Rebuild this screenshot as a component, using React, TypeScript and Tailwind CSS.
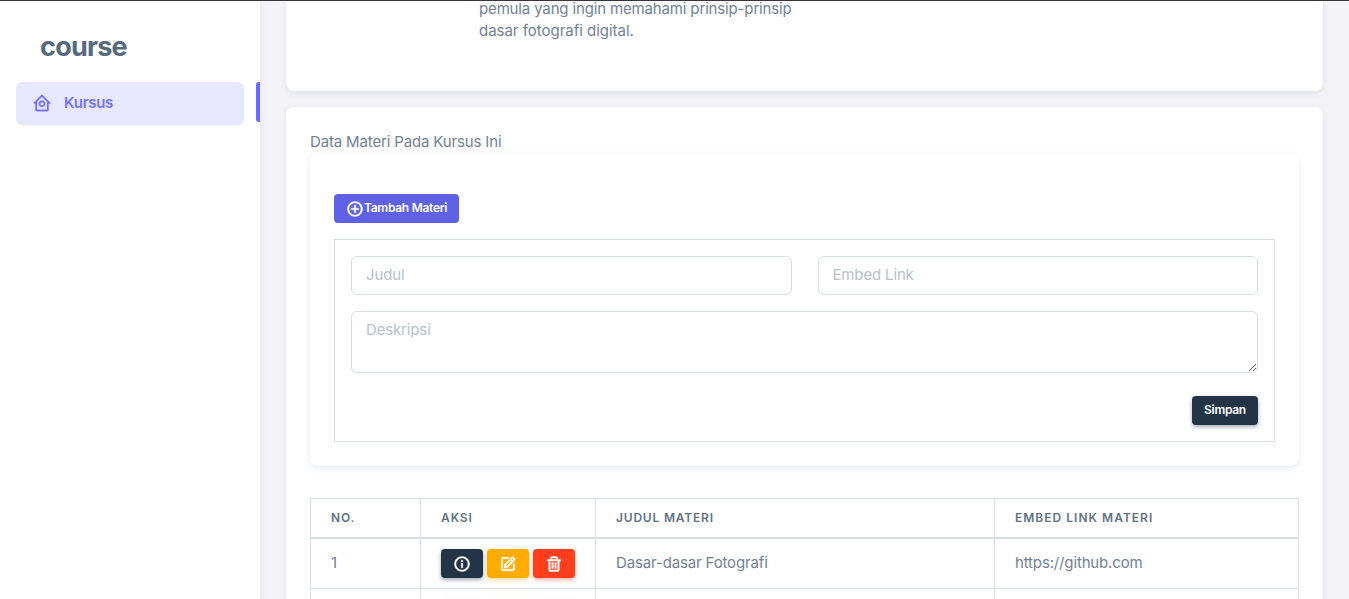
import React from "react";
import { BiEdit, BiHomeCircle, BiInfoCircle, BiPlusCircle, BiTrash } from "react-icons/bi";

const materials = [{ no: 1, title: "Dasar-dasar Fotografi", link: "https://github.com" }];

const field =
  "block rounded-[6px] border border-[#d9dee3] bg-white px-[14px] text-[15px] tracking-[-0.15px] text-[#697a8d] outline-none placeholder:text-[#b9c1ca] placeholder:opacity-100";

const heading =
  "h-[39px] border border-b-2 border-[#d9dee3] px-5 text-left text-[12px] font-semibold uppercase text-[#5f7286]";

const cell = "h-[51px] border border-[#d9dee3] px-5";

const icon = "size-[18px] shrink-0 stroke-white stroke-[0.6px]";

function Sidebar() {
  return (
    <aside className="h-full w-[260px] shrink-0 bg-white shadow-[0_2px_6px_0_rgba(67,89,113,0.12)]">
      <div className="flex h-[81px] items-center pt-[9px] pl-10">
        <span className="text-[27px] leading-none font-bold tracking-[-0.75px] text-[#566a7f]">course</span>
      </div>
      <nav className="flex justify-between">
        <a className="ml-4 flex h-[43px] w-[228px] items-center rounded-[6px] bg-[#e7e7ff] pl-4 text-[15px] font-semibold text-[#7174ff]">
          <BiHomeCircle className="-mt-px mr-[12px] size-5 stroke-[#7174ff] stroke-[0.3px]" />
          <span className="-mt-0.5 tracking-[-0.3px]">Kursus</span>
        </a>
        <span className="h-10 w-1 rounded-l-[3px] bg-[#696cff]" />
      </nav>
    </aside>
  );
}

function MaterialForm() {
  return (
    <div className="h-[312px] rounded-[8px] bg-white px-6 pt-10 shadow-[0_2px_6px_0_rgba(67,89,113,0.12)]">
      <button className="flex h-[29px] w-[125px] items-center rounded-[4px] bg-[#5f61e6] pl-3 text-[12px] font-semibold text-white">
        <BiPlusCircle className={icon + " mt-px"} />
        <span className="-mt-0.5 whitespace-nowrap tracking-[-0.28px]">Tambah Materi</span>
      </button>
      <form className="mt-4 flex h-[203px] flex-col border border-[#d9dee3] p-4">
        <div className="grid grid-cols-2 gap-[26px]">
          <input placeholder="Judul" className={field + " h-[39px] w-full pb-0.5"} />
          <input placeholder="Embed Link" className={field + " h-[39px] w-full pb-0.5"} />
        </div>
        <textarea placeholder="Deskripsi" className={field + " mt-4 h-[62px] w-full shrink-0 resize py-[6px] leading-[23px]"} />
        <button
          type="button"
          className="mt-[23px] h-[29px] w-[66px] shrink-0 self-end rounded-[4px] bg-[#233446] pb-0.5 text-[12px] font-semibold tracking-[-0.3px] text-white shadow-[0_2px_4px_0_rgba(35,52,70,0.4)]"
        >
          Simpan
        </button>
      </form>
    </div>
  );
}

function Actions() {
  return (
    <div className="flex gap-1 text-white">
      <button className="flex h-[29px] w-[42px] items-center justify-center rounded-[4px] bg-[#233446] pt-px shadow-[0_2px_4px_0_rgba(35,52,70,0.4)]">
        <BiInfoCircle className={icon} />
      </button>
      <button className="flex h-[29px] w-[42px] items-center justify-center rounded-[4px] bg-[#ffab00] pt-px shadow-[0_2px_4px_0_rgba(255,171,0,0.4)]">
        <BiEdit className={icon} />
      </button>
      <button className="flex h-[29px] w-[42px] items-center justify-center rounded-[4px] bg-[#ff3e1d] pt-px shadow-[0_2px_4px_0_rgba(255,62,29,0.4)]">
        <BiTrash className={icon} />
      </button>
    </div>
  );
}

function MaterialTable() {
  return (
    <table className="mt-8 w-[989px] table-fixed border-collapse">
      <colgroup>
        <col className="w-[110px]" />
        <col className="w-[175px]" />
        <col className="w-[399px]" />
        <col />
      </colgroup>
      <thead>
        <tr>
          <th className={heading + " tracking-[0.8px]"}>No.</th>
          <th className={heading + " tracking-[0.9px]"}>Aksi</th>
          <th className={heading + " tracking-[0.8px]"}>Judul Materi</th>
          <th className={heading + " tracking-[1.02px]"}>Embed Link Materi</th>
        </tr>
      </thead>
      <tbody className="tracking-[-0.15px]">
        {materials.map((item) => (
          <tr key={item.no}>
            <td className={cell}>{item.no}</td>
            <td className={cell}>
              <Actions />
            </td>
            <td className={cell}>{item.title}</td>
            <td className={cell}>{item.link}</td>
          </tr>
        ))}
        <tr>
          <td className={cell} />
          <td className={cell}>
            <Actions />
          </td>
          <td className={cell} />
          <td className={cell} />
        </tr>
      </tbody>
    </table>
  );
}

export default function App() {
  return (
    <div className="flex h-[599px] w-[1349px] flex-col overflow-hidden bg-[#f4f3f8] font-['Inter','Liberation_Sans',sans-serif] text-[15px] leading-[22px] text-[#728295]">
      <div className="h-px shrink-0 bg-[#37353b]" />
      <div className="flex min-h-0 flex-1">
        <Sidebar />
        <main className="flex min-w-0 flex-1 flex-col gap-4 overflow-hidden px-[26px]">
          <section className="h-[90px] shrink-0 rounded-b-[8px] bg-white pl-[193px] shadow-[0_2px_6px_0_rgba(67,89,113,0.12)]">
            <p className="-mt-[3px] w-[330px] tracking-[-0.15px]">
              pemula yang ingin memahami prinsip-prinsip
              <br />
              <span className="tracking-[-0.02px]">dasar fotografi digital.</span>
            </p>
          </section>
          <section className="shrink-0 rounded-[8px] bg-white px-6 pt-6 shadow-[0_2px_6px_0_rgba(67,89,113,0.12)]">
            <p className="h-[23px] leading-[21px] tracking-[-0.15px]">Data Materi Pada Kursus Ini</p>
            <MaterialForm />
            <MaterialTable />
          </section>
        </main>
      </div>
    </div>
  );
}
